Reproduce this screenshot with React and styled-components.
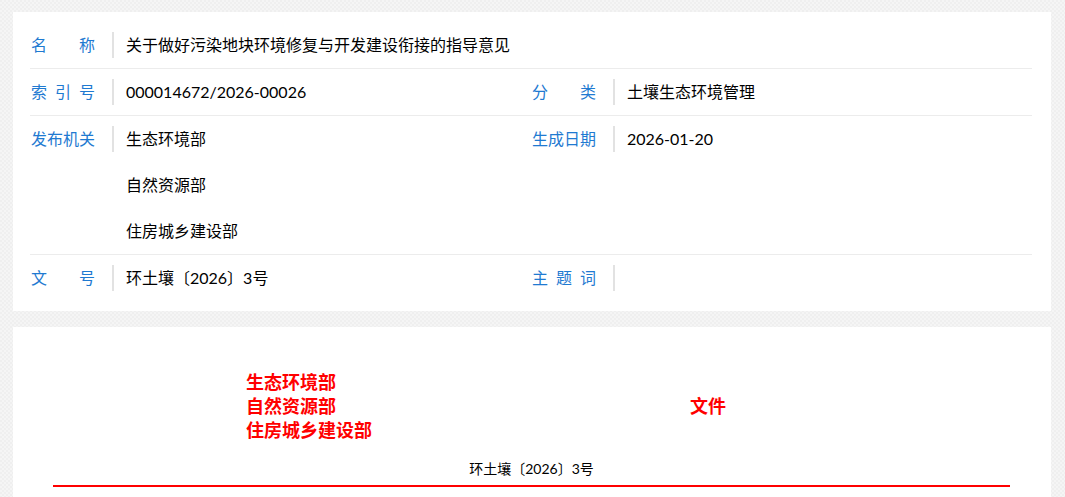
import React from "react";
import styled, { createGlobalStyle } from "styled-components";

const GlobalStyle = createGlobalStyle`
  html { overflow: hidden; }
  body {
    margin: 0;
    background-color: #efefef;
    background-image:
      linear-gradient(45deg, rgba(255,255,255,0.35) 25%, transparent 25%, transparent 75%, rgba(255,255,255,0.35) 75%),
      linear-gradient(45deg, rgba(255,255,255,0.35) 25%, transparent 25%, transparent 75%, rgba(255,255,255,0.35) 75%);
    background-size: 4px 4px;
    background-position: 0 0, 2px 2px;
    font-family: "Lato", "Noto Sans CJK SC", sans-serif;
  }
`;

const Page = styled.div`
  width: 1038px;
  margin: 12px 0 0 13px;
  display: flex;
  flex-direction: column;
  gap: 16px;
`;

const Card = styled.section`
  background: #ffffff;
  padding: ${(p) => p.$pad};
`;

const Row = styled.div`
  display: grid;
  grid-template-columns: ${(p) => (p.$single ? "1fr" : "1fr 1fr")};
  border-bottom: ${(p) => (p.$last ? "none" : "1px solid #ececec")};
`;

const Field = styled.div`
  display: flex;
  align-items: flex-start;
  padding-left: 1px;
`;

const Label = styled.div`
  width: 64px;
  flex: none;
  font-size: 16px;
  line-height: 46px;
  color: #1f7ad1;
  text-align: justify;
  text-align-last: justify;
  white-space: nowrap;
`;

const Bar = styled.span`
  flex: none;
  width: 2px;
  height: 26px;
  margin: 10px 12px 0 17px;
  background: #e2e2e2;
`;

const Values = styled.div`
  display: flex;
  flex-direction: column;
`;

const Value = styled.div`
  font-size: 16px;
  line-height: 46px;
  color: #000;
  white-space: nowrap;
`;

const DocHead = styled.div`
  display: flex;
  align-items: center;
  margin-left: 193px;
`;

const Issuers = styled.div`
  width: 444px;
  display: flex;
  flex-direction: column;
`;

const RedText = styled.div`
  font-family: "Noto Sans CJK SC", sans-serif;
  font-weight: 700;
  font-size: 18px;
  line-height: 24px;
  color: #ff0000;
`;

const DocNo = styled.div`
  margin-top: 18px;
  text-align: center;
  font-size: 14px;
  line-height: 20px;
  color: #000;
`;

const RedRule = styled.div`
  margin-top: 6px;
  height: 2px;
  background: #ff0000;
`;

const Item = ({ label, values }) => (
  <Field>
    <Label>{label}</Label>
    <Bar />
    <Values>
      {values.map((v, i) => (
        <Value key={i}>{v}</Value>
      ))}
    </Values>
  </Field>
);

export default function App() {
  return (
    <>
      <GlobalStyle />
      <Page>
        <Card $pad="10px 19px 10px 17px">
          <Row $single>
            <Item label="名 称" values={["关于做好污染地块环境修复与开发建设衔接的指导意见"]} />
          </Row>
          <Row>
            <Item label="索 引 号" values={["000014672/2026-00026"]} />
            <Item label="分 类" values={["土壤生态环境管理"]} />
          </Row>
          <Row>
            <Item label="发布机关" values={["生态环境部", "自然资源部", "住房城乡建设部"]} />
            <Item label="生成日期" values={["2026-01-20"]} />
          </Row>
          <Row $last>
            <Item label="文 号" values={["环土壤〔2026〕3号"]} />
            <Item label="主 题 词" values={[]} />
          </Row>
        </Card>
        <Card $pad="42px 41px 20px 40px">
          <DocHead>
            <Issuers>
              <RedText>生态环境部</RedText>
              <RedText>自然资源部</RedText>
              <RedText>住房城乡建设部</RedText>
            </Issuers>
            <RedText>文件</RedText>
          </DocHead>
          <DocNo>环土壤〔2026〕3号</DocNo>
          <RedRule />
        </Card>
      </Page>
    </>
  );
}
